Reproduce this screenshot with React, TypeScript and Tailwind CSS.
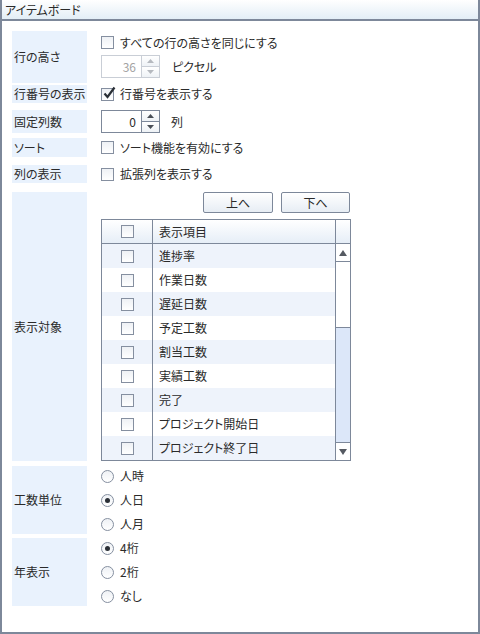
import React from 'react'

const FONT = "font-['Noto_Sans_CJK_JP',sans-serif] [font-feature-settings:'palt']"

function CheckBox({ checked = false }: { checked?: boolean }) {
  return (
    <span className="relative flex h-[13px] w-[13px] shrink-0 items-center justify-center border border-[#858fa0] bg-gradient-to-b from-[#eef1f5] to-white">
      {checked && (
        <svg width="14" height="14" viewBox="0 0 14 14" className="absolute left-[0px] top-[-3px]">
          <path d="M2.5 7.5 L5.5 11 L12.5 1.5" fill="none" stroke="#2a2f36" strokeWidth="2.2" />
        </svg>
      )}
    </span>
  )
}

function Radio({ checked = false }: { checked?: boolean }) {
  return (
    <span className="flex h-[13px] w-[13px] shrink-0 items-center justify-center rounded-full border border-[#858fa0] bg-gradient-to-b from-[#eef1f5] to-white">
      {checked && <span className="h-[5px] w-[5px] rounded-full bg-[#2a2f36]" />}
    </span>
  )
}

function Arrow({ up, color, w = 7, h = 4 }: { up: boolean; color: string; w?: number; h?: number }) {
  return (
    <svg width={w} height={h} viewBox={`0 0 ${w} ${h}`}>
      <path d={up ? `M0 ${h} L${w / 2} 0 L${w} ${h} Z` : `M0 0 L${w / 2} ${h} L${w} 0 Z`} fill={color} />
    </svg>
  )
}

function Spinner({ value, disabled = false }: { value: string; disabled?: boolean }) {
  const border = disabled ? 'border-[#c9ced6]' : 'border-[#7d889a]'
  return (
    <div className={`flex h-[23px] w-[59px] border bg-white ${border}`}>
      <div className={`flex flex-1 items-center justify-end pr-[5px] text-[12px] ${disabled ? 'text-[#a3a3a3]' : 'text-[#2a2a2a]'}`}>
        {value}
      </div>
      <div className={`flex w-[18px] flex-col border-l ${border}`}>
        <div className={`flex flex-1 items-center justify-center border-b ${border} bg-gradient-to-b from-white to-[#eef2f6]`}>
          <Arrow up color={disabled ? '#b5b9bf' : '#4a4f57'} />
        </div>
        <div className="flex flex-1 items-center justify-center bg-gradient-to-b from-white to-[#eef2f6]">
          <Arrow up={false} color={disabled ? '#b5b9bf' : '#4a4f57'} />
        </div>
      </div>
    </div>
  )
}

function Label({ children }: { children: React.ReactNode }) {
  return (
    <div className="flex w-[75px] shrink-0 items-center bg-[#e9f2fd] pl-[2px] text-[12px]">
      {children}
    </div>
  )
}

const items = ['進捗率', '作業日数', '遅延日数', '予定工数', '割当工数', '実績工数', '完了', 'プロジェクト開始日', 'プロジェクト終了日']

function ItemTable() {
  return (
    <div className="w-[250px] border border-[#7d889a] bg-white">
      {/* header */}
      <div className="flex h-[24px] border-b border-[#7d889a] bg-gradient-to-b from-white to-[#e6eef7]">
        <div className="flex w-[51px] items-center justify-center border-r border-[#7d889a]">
          <CheckBox />
        </div>
        <div className="flex flex-1 items-center pl-[6px]">表示項目</div>
        <div className="w-[15px] border-l border-[#7d889a]" />
      </div>
      {/* body */}
      <div className="flex h-[216px]">
        <div className="flex flex-1 flex-col">
          {items.map((name, i) => (
            <div key={name} className={`flex h-[24px] ${i % 2 === 0 ? 'bg-[#eef3fb]' : 'bg-white'}`}>
              <div className="flex w-[51px] items-center justify-center border-r border-[#7d889a]">
                <CheckBox />
              </div>
              <div className="flex flex-1 items-center pl-[6px]">{name}</div>
            </div>
          ))}
        </div>
        <div className="flex w-[15px] flex-col border-l border-[#7d889a]">
          <div className="flex h-[18px] items-center justify-center border-b border-[#7d889a] bg-white">
            <Arrow up color="#555a62" w={8} h={6} />
          </div>
          <div className="h-[66px] border-b border-[#7d889a] bg-white" />
          <div className="flex-1 bg-[#dce7f9]" />
          <div className="flex h-[18px] items-center justify-center border-t border-[#7d889a] bg-white">
            <Arrow up={false} color="#555a62" w={8} h={6} />
          </div>
        </div>
      </div>
    </div>
  )
}

function Button({ children, width }: { children: React.ReactNode; width: string }) {
  return (
    <button className={`flex h-[21px] ${width} items-center justify-center rounded-[2px] border border-[#7d889a] bg-gradient-to-b from-white to-[#e7edf4] text-[12px] text-[#2a2a2a]`}>
      {children}
    </button>
  )
}

export default function App() {
  return (
    <div className={`flex h-[634px] w-[480px] flex-col border-x-2 border-b-2 border-[#7d889a] bg-white text-[12px] text-[#2a2a2a] ${FONT}`}>
      {/* Title bar */}
      <div className="flex h-[21px] shrink-0 items-center border-b-2 border-[#7d889a] bg-gradient-to-b from-white to-[#e3eef6] pl-[3px]">
        アイテムボード
      </div>

      <div className="flex flex-col pl-[10px] pt-[10px]">
        {/* 行の高さ */}
        <div className="flex h-[52px]">
          <Label>行の高さ</Label>
          <div className="ml-[14px] flex flex-col pt-[5px]">
            <div className="flex h-[13px] items-center gap-[6px]">
              <CheckBox />
              <span>すべての行の高さを同じにする</span>
            </div>
            <div className="mt-[6px] flex items-center gap-[12px]">
              <Spinner value="36" disabled />
              <span>ピクセル</span>
            </div>
          </div>
        </div>

        {/* 行番号の表示 */}
        <div className="mt-[2px] flex h-[18px]">
          <Label>行番号の表示</Label>
          <div className="ml-[14px] flex items-center gap-[6px]">
            <CheckBox checked />
            <span>行番号を表示する</span>
          </div>
        </div>

        {/* 固定列数 */}
        <div className="mt-[7px] flex h-[23px]">
          <Label>固定列数</Label>
          <div className="ml-[14px] flex items-center gap-[11px]">
            <Spinner value="0" />
            <span>列</span>
          </div>
        </div>

        {/* ソート */}
        <div className="mt-[5px] flex h-[19px]">
          <Label>ソート</Label>
          <div className="ml-[14px] flex items-center gap-[6px]">
            <CheckBox />
            <span>ソート機能を有効にする</span>
          </div>
        </div>

        {/* 列の表示 */}
        <div className="mt-[8px] flex h-[18px]">
          <Label>列の表示</Label>
          <div className="ml-[14px] flex items-center gap-[6px]">
            <CheckBox />
            <span>拡張列を表示する</span>
          </div>
        </div>

        {/* 表示対象 */}
        <div className="mt-[9px] flex h-[269px]">
          <Label>表示対象</Label>
          <div className="ml-[14px] flex flex-col">
            <div className="flex w-[250px] justify-end gap-[8px] pr-[1px]">
              <Button width="w-[70px]">上へ</Button>
              <Button width="w-[69px]">下へ</Button>
            </div>
            <div className="mt-[6px]">
              <ItemTable />
            </div>
          </div>
        </div>

        {/* 工数単位 */}
        <div className="mt-[5px] flex">
          <Label>工数単位</Label>
          <div className="ml-[14px] flex flex-col gap-[4px]">
            {[['人時', false], ['人日', true], ['人月', false]].map(([t, c]) => (
              <div key={t as string} className="flex h-[20px] items-center gap-[6px]">
                <Radio checked={c as boolean} />
                <span>{t as string}</span>
              </div>
            ))}
          </div>
        </div>

        {/* 年表示 */}
        <div className="mt-[4px] flex">
          <Label>年表示</Label>
          <div className="ml-[14px] flex flex-col gap-[4px]">
            {[['4桁', true], ['2桁', false], ['なし', false]].map(([t, c]) => (
              <div key={t as string} className="flex h-[20px] items-center gap-[6px]">
                <Radio checked={c as boolean} />
                <span>{t as string}</span>
              </div>
            ))}
          </div>
        </div>
      </div>
    </div>
  )
}
